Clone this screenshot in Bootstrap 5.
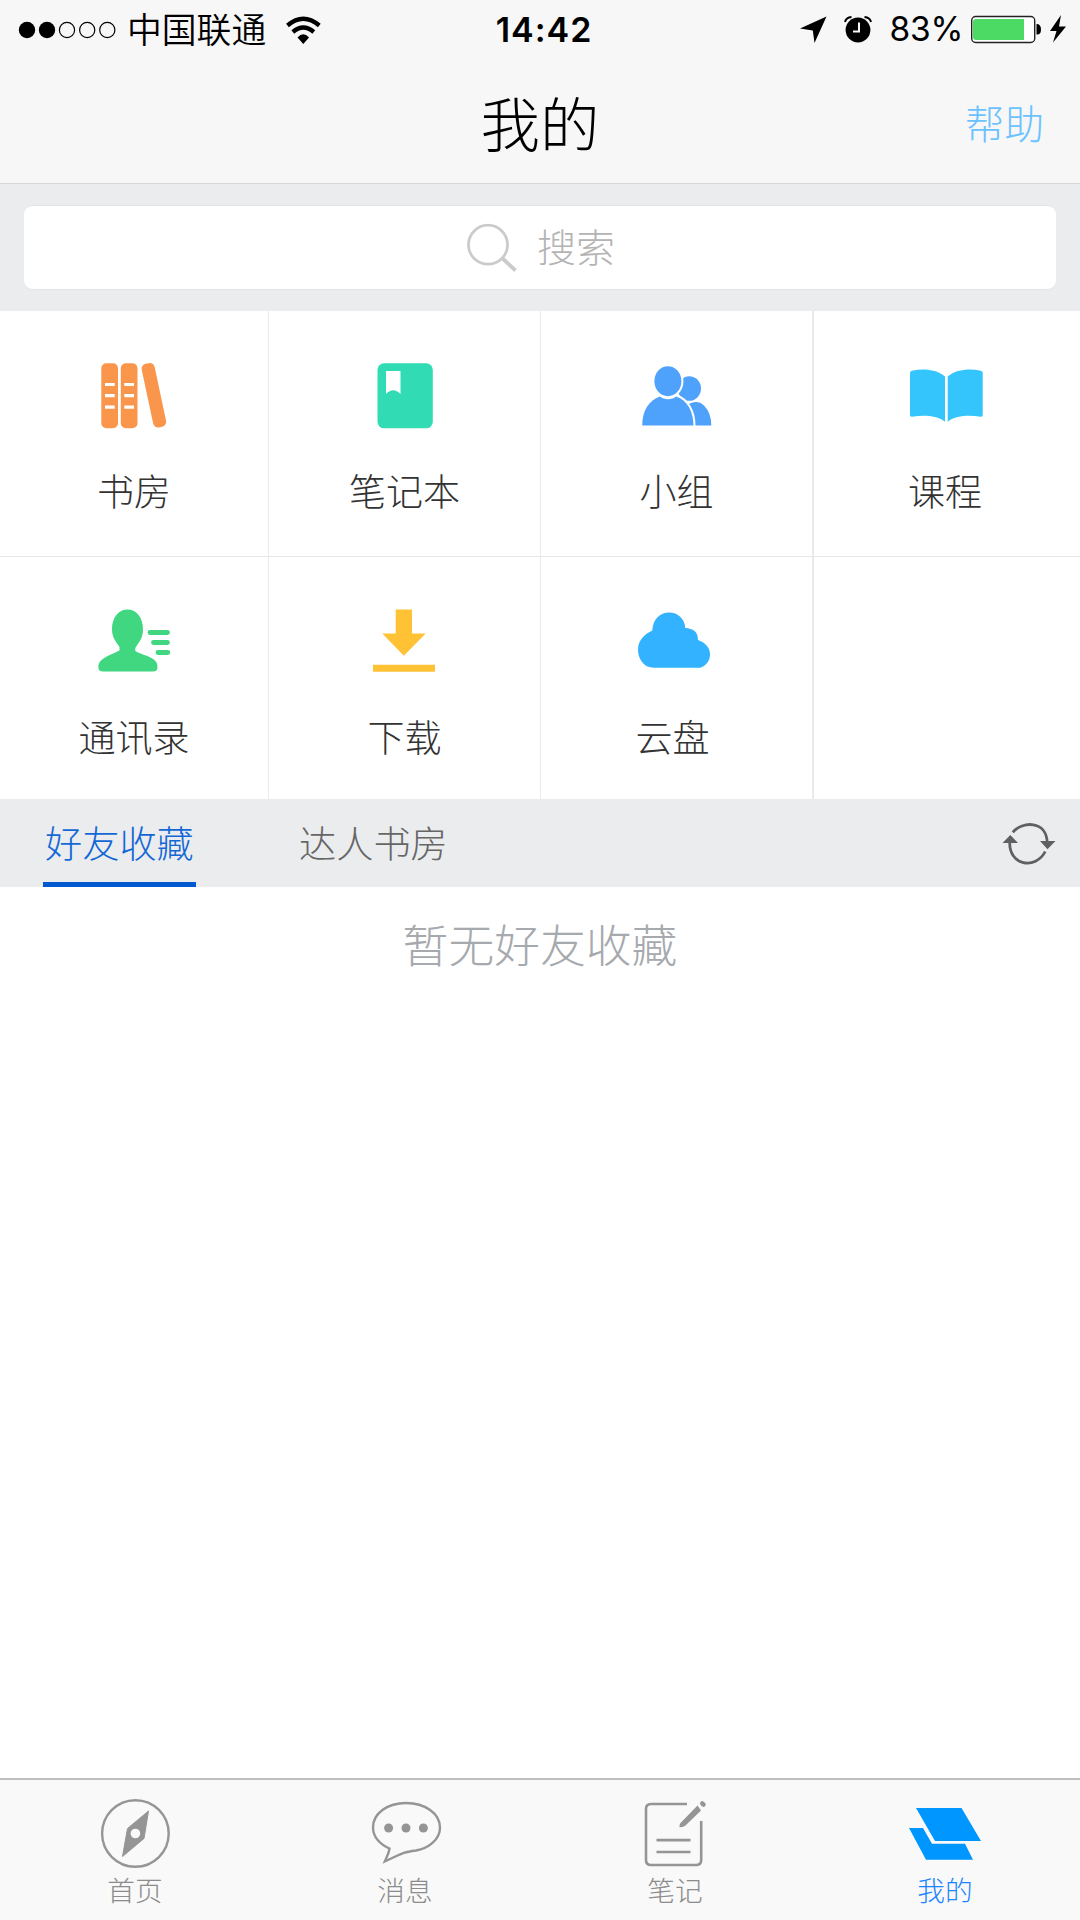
<!DOCTYPE html>
<html lang="zh-CN">
<head>
<meta charset="utf-8">
<meta name="viewport" content="width=device-width, initial-scale=1">
<title>我的</title>
<link href="https://cdn.jsdelivr.net/npm/bootstrap@5.3.0/dist/css/bootstrap.min.css" rel="stylesheet">
<style>
body{font-family:"Noto Sans CJK SC",sans-serif;font-weight:300;background:#fff;color:#333;line-height:1}
svg{display:block;flex:none}
.screen{width:1080px;height:1920px}
.topbar{height:184px;background:#f7f7f8;border-bottom:1px solid #d6d7d9;color:#000}
.status{height:59px;padding:0 12px 0 18px}
.status .side{flex:1 1 0}
.carrier{font-size:34.8px;font-weight:350;margin-left:11px;line-height:56px;margin-bottom:3px}
.digits{font-family:Inter,"Noto Sans",sans-serif;font-size:34px}
.clock{font-weight:600;letter-spacing:1px;color:#000;padding-left:2px}
.pct{font-weight:400;font-size:33.5px;letter-spacing:-.3px;margin:0 7px 0 15px}
.titlebar{height:125px;padding:0 36px}
.titlebar .side{flex:1 1 0}
.title{font-size:59.5px;font-weight:300;margin:0}
.help{font-size:39.5px;color:#6bc2ff}
.searchwrap{height:127px;background:#ebecee;padding:21px 24px 21px}
.searchbox{background:#fff;border-radius:9px;border-top:1px solid #e2e3e4;border-bottom:1px solid #e2e3e4;color:#b4b4b4;font-size:39px;gap:19px;padding-left:1px}
.searchbox span{padding-bottom:4px}
.tiles{display:grid;grid-template-columns:269px 272px 273px 266px;grid-template-rows:246px 242px;background:#fff}
.tile{border-right:1px solid #e9eaed;font-size:37px;padding-top:44px;gap:35px}
.tile.line{border-bottom:1px solid #e5e6e8}
.tile.wide{border-right-width:2px}
.tile.last{border-right:0}
.tile span{line-height:40px}
.tabsbar{height:88px;background:#ebecee;padding:0 22px 0 43px;font-size:37.2px}
.tabsbar a{color:#666;text-decoration:none;height:88px;line-height:86px;padding:0 2px;border-bottom:5px solid transparent;width:153px;white-space:nowrap}
.tabsbar a.on{color:#1368d6;border-color:#0059cf}
.tabsbar a.other{margin-left:101px}
.empty{font-size:45.8px;color:#a6a9ad;padding-top:34px}
.bottombar{height:142px;background:#f9f9f9;border-top:2px solid #bebebe;color:#8c8c8c;font-size:27.7px}
.bottombar a{color:inherit;text-decoration:none;padding-top:15px;gap:1px}
.bottombar a.on{color:#1a85ff}
</style>
</head>
<body>
<div class="screen d-flex flex-column overflow-hidden">
  <header class="topbar">
    <div class="status d-flex align-items-center">
      <div class="side d-flex align-items-center">
        <svg width="98" height="18" viewBox="18 20.5 98 18"><g fill="#000"><circle cx="27" cy="29.5" r="8.2"/><circle cx="47" cy="29.5" r="8.2"/></g><g fill="none" stroke="#000" stroke-width="1.2"><circle cx="67" cy="29.5" r="7.6"/><circle cx="87.2" cy="29.5" r="7.6"/><circle cx="107.3" cy="29.5" r="7.6"/></g></svg>
        <span class="carrier">中国联通</span>
        <svg class="ms-3" width="40" height="30" viewBox="282 14 40 30"><path d="M297.500 36.500Q303.300 30 309 36.500L303.300 43Z"/><g fill="none" stroke="#000" stroke-width="4.300"><path d="M287.500 24.500Q303.300 11 319.300 24.500"/><path d="M292.800 31Q303.300 22 313.800 31"/></g></svg>
      </div>
      <div class="digits clock">14:42</div>
      <div class="side d-flex align-items-center justify-content-end">
        <svg width="76" height="32" viewBox="800 14 76 32"><path d="M801 28.500L827.500 16.500L815.500 43L813.800 30.500Z"/><circle cx="859" cy="30" r="12.400"/><g fill="none" stroke="#000" stroke-width="2"><path d="M846 22Q847 17.500 852.500 17"/><path d="M872 22Q871 17.500 865.500 17"/></g><path d="M860 22.500V31.500H854" fill="none" stroke="#f7f7f8" stroke-width="2"/></svg>
        <span class="digits pct">83%</span>
        <svg width="98" height="32" viewBox="970 14 98 32"><rect x="971.700" y="16.500" width="63" height="26" rx="4" fill="#fff" stroke="#222" stroke-width="1.400"/><path d="M976 19H1024V40H976Q973 40 973 37V22Q973 19 976 19Z" fill="#4cd964"/><path d="M1036.500 24Q1041 24 1041 29.500T1036.500 34.500Z"/><path d="M1061 15L1050 31H1056.500L1053 42.500L1066 26.500H1059Z"/></svg>
      </div>
    </div>
    <div class="titlebar d-flex align-items-center">
      <div class="side"></div>
      <h1 class="title">我的</h1>
      <div class="side text-end help">帮助</div>
    </div>
  </header>
  <div class="searchwrap">
    <div class="searchbox h-100 d-flex align-items-center justify-content-center">
      <svg width="52" height="50" viewBox="466 223 52 50" fill="none" stroke="#cbcbcb"><circle cx="488" cy="244.700" r="19.500" stroke-width="2.800"/><path d="M502 258L515.500 270.500" stroke-width="3.800"/></svg>
      <span>搜索</span>
    </div>
  </div>
  <main class="flex-grow-1">
    <div class="tiles">
      <div class="tile line d-flex flex-column align-items-center">
        <svg width="80" height="80" viewBox="94 355 80 80" fill="#fa964b"><rect x="101.300" y="363.300" width="16.700" height="64.900" rx="5"/><rect x="120.800" y="363.300" width="16.700" height="64.900" rx="5"/><rect x="147.300" y="362.800" width="13.200" height="65" rx="5" transform="rotate(-12 153.700 395.300)"/><path d="M105 384.500h9.700M105 395.700h9.700M105 407.200h9.700M124.300 384.500h9.700M124.300 395.700h9.700M124.300 407.200h9.700" stroke="#fff" stroke-width="3.200"/></svg>
        <span>书房</span>
      </div>
      <div class="tile line d-flex flex-column align-items-center">
        <svg width="80" height="80" viewBox="365 355 80 80"><rect x="377.500" y="363.300" width="55.300" height="65" rx="6.500" fill="#31dcb5"/><path d="M386 371H400.500V394Q393.200 386.500 386 394Z" fill="#fff"/></svg>
        <span>笔记本</span>
      </div>
      <div class="tile line wide d-flex flex-column align-items-center">
        <svg width="80" height="80" viewBox="637 355 80 80" fill="#4fa2fb"><ellipse cx="689.300" cy="388.500" rx="11.700" ry="12.300"/><path d="M688 404.500C693 401.500 699 400.500 704 405.500Q711.300 413 711.300 425.400H690Z"/><g stroke="#fff" stroke-width="4" paint-order="stroke"><path d="M642.200 425.400C642.200 411 649 400 660 396.500C664 400 672 400 676 396.500C688 400 693.500 413 693.500 425.400Z"/><ellipse cx="667.900" cy="381.200" rx="13.500" ry="15"/></g></svg>
        <span>小组</span>
      </div>
      <div class="tile line last d-flex flex-column align-items-center">
        <svg width="80" height="80" viewBox="907 355 80 80" fill="#33c5fb"><path id="leaf" d="M910 373Q910 371.300 912 370.700C923 368.300 936 369 945 376.500V421.700C936 415.500 925 415 912 416.700Q910 417 910 415Z"/><use href="#leaf" transform="matrix(-1 0 0 1 1892.700 0)"/></svg>
        <span class="pe-1">课程</span>
      </div>
      <div class="tile d-flex flex-column align-items-center">
        <svg width="80" height="80" viewBox="94 601 80 80" fill="#41d780"><path d="M127.500 609.500C136 609.500 143 617 143 629C143 639 138.500 642.500 135.300 648V651C141 654.500 149 655.500 154.500 660Q157.500 662.500 157.500 667Q157.500 671.500 153 671.500H103Q98.300 671.500 98.300 667Q98.300 662.500 101.500 660C107 655.500 112 654.500 119.500 650.500V647C116 641.500 112 638 112 629C112 617 119 609.500 127.500 609.500Z"/><path d="M150 632.500h17.500M153.500 642.500h14M158 652.500h9.800" stroke="#41d780" stroke-width="4.800" stroke-linecap="round"/></svg>
        <span>通讯录</span>
      </div>
      <div class="tile d-flex flex-column align-items-center">
        <svg width="80" height="80" viewBox="365 601 80 80" fill="#ffc235"><path d="M395.700 609.500H412V633.500H425.700L403.800 655.700L382.300 633.500H395.700ZM373 664.800H435V671.700H373Z"/></svg>
        <span>下载</span>
      </div>
      <div class="tile wide d-flex flex-column align-items-center">
        <svg width="80" height="80" viewBox="637 601 80 80" fill="#33b2ff"><path d="M654 667.800C643 667.800 638 658 638 649.500C638 640 645 634 652.300 630.500C653 619 660 612.500 669 612.500C678 612.500 684.500 618.500 685.300 628C693 628.500 698 631.500 698 640C706 643 710 648 710 654.500C710 661 706 665.500 700.500 667.800Z"/></svg>
        <span class="pe-2">云盘</span>
      </div>
      <div class="tile last"></div>
    </div>
    <nav class="tabsbar d-flex align-items-center">
      <a href="#" class="on">好友收藏</a>
      <a href="#" class="other">达人书房</a>
      <svg class="ms-auto" width="58" height="46" viewBox="1000 820 58 46"><g fill="none" stroke="#606060" stroke-width="2.800"><path d="M1012.800 832.300C1022 821 1047 820 1047.200 843"/><path d="M1045.200 851.500C1036 870 1008 866 1009.800 841"/></g><path d="M1040 841H1055.500L1047.500 849.300ZM1002.500 843H1018L1010.300 835Z" fill="#606060"/></svg>
    </nav>
    <p class="empty text-center mb-0">暂无好友收藏</p>
  </main>
  <footer class="bottombar d-flex">
    <a href="#" class="col d-flex flex-column align-items-center">
      <svg width="80" height="80" viewBox="95 1795 80 80"><circle cx="135.400" cy="1833.500" r="33.300" fill="none" stroke="#959595" stroke-width="2.400"/><path d="M148.500 1811L144 1838.500L122.500 1856.500L127.500 1828.500Z" fill="#959595" stroke="#959595" stroke-linejoin="round"/><circle cx="135.400" cy="1833.500" r="4.800" fill="#f9f9f9"/></svg>
      <span>首页</span>
    </a>
    <a href="#" class="col d-flex flex-column align-items-center">
      <svg width="80" height="80" viewBox="365 1795 80 80"><path d="M384.800 1861.500C387 1856 389 1853 389.500 1848.500C380 1844.500 373 1837 373 1827.500C373 1813 388 1803 406 1803C425 1803 440 1813.500 440 1827.500C440 1840 428 1848.500 416 1850.500C402 1852.500 403 1853 384.800 1861.500Z" fill="none" stroke="#959595" stroke-width="2.400"/><g fill="#959595"><circle cx="388.600" cy="1828" r="4.500"/><circle cx="406" cy="1828" r="4.500"/><circle cx="423.400" cy="1828" r="4.500"/></g></svg>
      <span>消息</span>
    </a>
    <a href="#" class="col d-flex flex-column align-items-center">
      <svg width="80" height="80" viewBox="635.500 1795.500 80 80" fill="none" stroke="#959595" stroke-width="2.600"><path d="M687.500 1804.500H651.500Q646.500 1804.500 646.500 1809.500V1860.500Q646.500 1865.500 651.500 1865.500H696.500Q701.700 1865.500 701.700 1860.500V1821.500M657 1840.600H691M657 1852.500H691"/><path d="M698 1806L701.500 1811L686 1826Q684 1828 680 1827.800Q679.700 1825 681 1823.500Z" fill="#959595" stroke="none"/><path d="M702.800 1804L704 1805" stroke-width="4.500" stroke-linecap="round"/></svg>
      <span>笔记</span>
    </a>
    <a href="#" class="col d-flex flex-column align-items-center on">
      <svg width="80" height="80" viewBox="905 1795 80 80" fill="#0096ff"><path d="M916 1808H961.500L981 1841H935ZM909 1828H923L932 1843.800H965L973 1859.800H926Z"/></svg>
      <span>我的</span>
    </a>
  </footer>
</div>
<script src="https://cdn.jsdelivr.net/npm/bootstrap@5.3.0/dist/js/bootstrap.bundle.min.js"></script>
</body>
</html>
